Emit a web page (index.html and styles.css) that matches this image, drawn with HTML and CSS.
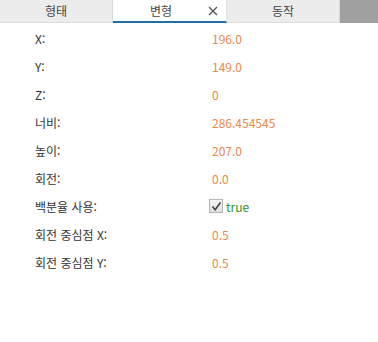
FILE: index.html
```html
<!DOCTYPE html>
<html lang="ko">
<head>
<meta charset="utf-8">
<link rel="stylesheet" href="styles.css">
</head>
<body>
<div class="tabs">
  <div class="tab">형태</div>
  <div class="tab active"><span class="tab-label">변형</span><svg class="close" width="10" height="10" viewBox="0 0 10 10"><path d="M1 1 L9 9 M9 1 L1 9" stroke="#555" stroke-width="1.3" fill="none"/></svg></div>
  <div class="tab">동작</div>
  <div class="tab-fill"></div>
</div>
<div class="props">
  <div class="row"><span class="label">X:</span><span class="value">196.0</span></div>
  <div class="row"><span class="label">Y:</span><span class="value">149.0</span></div>
  <div class="row"><span class="label">Z:</span><span class="value">0</span></div>
  <div class="row"><span class="label">너비:</span><span class="value">286.454545</span></div>
  <div class="row"><span class="label">높이:</span><span class="value">207.0</span></div>
  <div class="row"><span class="label">회전:</span><span class="value">0.0</span></div>
  <div class="row"><span class="label">백분율 사용:</span><span class="value bool"><span class="check"><svg width="11" height="11" viewBox="0 0 11 11"><path d="M1.5 5.5 L4.2 8.8 L9.5 1.5" fill="none" stroke="#444" stroke-width="1.6"/></svg></span><span class="true">true</span></span></div>
  <div class="row"><span class="label">회전 중심점 X:</span><span class="value">0.5</span></div>
  <div class="row"><span class="label">회전 중심점 Y:</span><span class="value">0.5</span></div>
</div>
</body>
</html>
```
FILE: styles.css
```css
html, body {
  margin: 0;
  padding: 0;
  background: #ffffff;
}
body {
  width: 378px;
  height: 342px;
  font-family: "Noto Sans CJK KR", "Noto Sans", sans-serif;
  font-size: 12px;
  color: #333333;
}
.tabs {
  display: flex;
  height: 23px;
}
.tab {
  flex: 0 0 112px;
  height: 22px;
  background: #ececec;
  border-bottom: 1px solid #dcdcdc;
  border-right: 1px solid #d8d8d8;
  display: flex;
  align-items: center;
  justify-content: center;
  color: #444;
  font-size: 12px;
  line-height: 1;
  white-space: nowrap;
}
.tab.active {
  flex: 0 0 113px;
  background: #ffffff;
  border-bottom: 2px solid #1e6fa8;
  height: 21px;
  justify-content: flex-start;
  border-right: 1px solid #e4e4e4;
}
.tab-label {
  margin-left: 37px;
}
.close {
  margin-left: 36px;
  flex-shrink: 0;
}
.tab-fill {
  flex: 1;
  height: 23px;
  background: #a0a0a0;
}
.props {
  padding-top: 1px;
}
.row {
  display: flex;
  align-items: center;
  height: 28px;
}
.label {
  width: 177px;
  padding-left: 35px;
  color: #333;
}
.value {
  color: #e8894c;
}
.bool {
  display: flex;
  align-items: center;
  margin-left: -3px;
}
.check {
  width: 14px;
  height: 14px;
  box-sizing: border-box;
  border: 1px solid #b5b5b5;
  background: linear-gradient(#f4f4f4, #e0e0e0);
  display: flex;
  align-items: center;
  justify-content: center;
  margin-right: 3px;
}
.true {
  color: #2f8f1f;
}
```
